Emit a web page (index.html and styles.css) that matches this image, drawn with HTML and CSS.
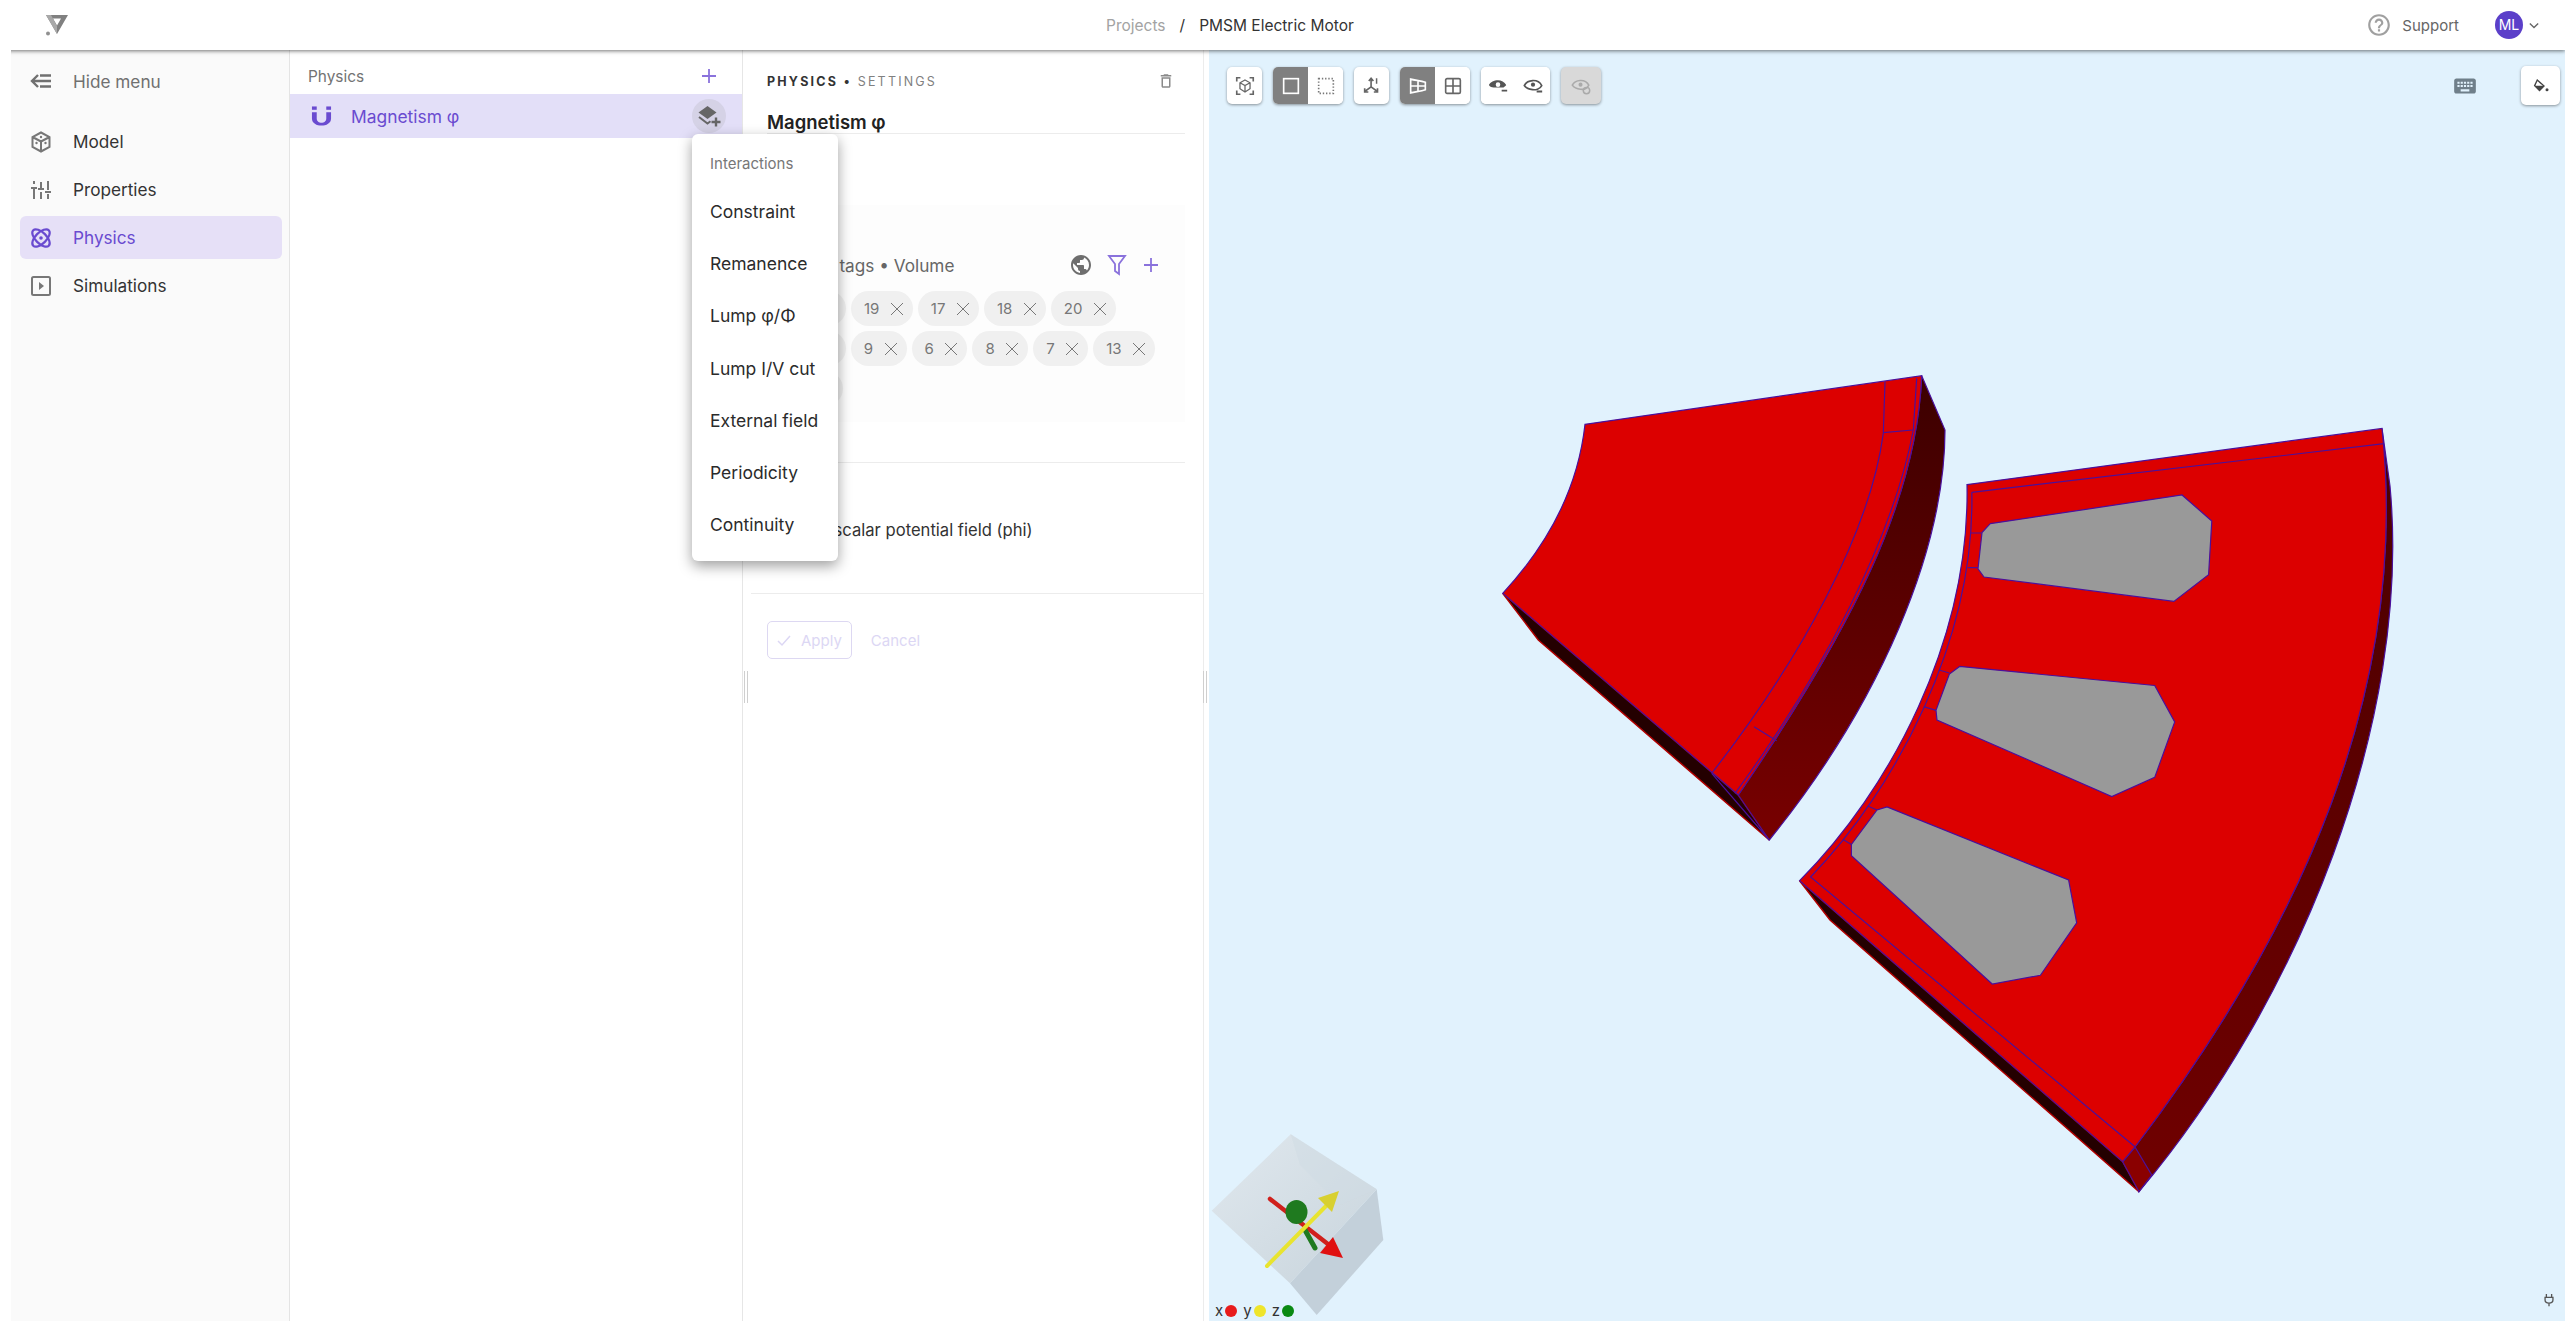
FILE: index.html
```html
<!DOCTYPE html>
<html lang="en">
<head>
    <meta charset="UTF-8">
    <title>PMSM Electric Motor</title>
    <link rel="stylesheet" href="styles.css">
</head>
<body>
    <header class="topbar">
        <svg class="logo" viewBox="0 0 24 22"><path d="M1 1h22L12 20zM8 4.500l4 7 4-7z" fill="#808080" fill-rule="evenodd"/><path d="M1 1l5 0 6 11v8z" fill="#a8a8a8"/><circle cx="3" cy="19.500" r="2" fill="#909090"/></svg>
        <nav class="crumbs">
            <span class="crumb-link">Projects</span>
            <span class="crumb-sep">/</span>
            <span class="crumb-current">PMSM Electric Motor</span>
        </nav>
        <div class="top-right">
            <svg class="icon-help" viewBox="0 0 24 24"><path d="M11 18h2v-2h-2v2zm1-16C6.480 2 2 6.480 2 12s4.480 10 10 10 10-4.480 10-10S17.520 2 12 2zm0 18c-4.410 0-8-3.590-8-8s3.590-8 8-8 8 3.590 8 8-3.590 8-8 8zm0-14c-2.210 0-4 1.790-4 4h2c0-1.100.9-2 2-2s2 .9 2 2c0 2-3 1.750-3 5h2c0-2.250 3-2.500 3-5 0-2.210-1.790-4-4-4z"/></svg>
            <span class="support">Support</span>
            <span class="avatar">ML</span>
            <svg class="chevron" viewBox="0 0 12 8"><path d="M1 1.500l5 5 5-5"/></svg>
        </div>
    </header>

    <div class="main">
        <div class="gutter"></div>

        <aside class="sidebar">
            <div class="hide-row">
                <svg class="nav-icon" viewBox="0 0 24 24"><path d="M22 6.500H11M22 12H4M22 17.500H11M9 6l-6 6 6 6" class="stroke-hide"/></svg>
                <span>Hide menu</span>
            </div>
            <div class="nav-item">
                <svg class="nav-icon" viewBox="0 0 24 24"><path d="M12 2.500l8.500 4.500v10L12 21.500 3.500 17V7zM3.500 7l8.500 4.500L20.500 7M12 11.500v10" class="stroke-gray"/><circle cx="12" cy="7" r="1.200" fill="#777"/><circle cx="7.500" cy="13" r="1.200" fill="#777"/><circle cx="16.500" cy="13" r="1.200" fill="#777"/></svg>
                <span>Model</span>
            </div>
            <div class="nav-item">
                <svg class="nav-icon" viewBox="0 0 24 24"><path d="M5 10v11M12 4v6M12 14v7M19 3v9M19 16v5M2 10h6M9 11h6M16 14h6M5 3v3" class="stroke-gray"/></svg>
                <span>Properties</span>
            </div>
            <div class="nav-item nav-active">
                <svg class="nav-icon" viewBox="0 0 24 24"><g class="stroke-purple"><ellipse cx="12" cy="12" rx="5.500" ry="11" transform="rotate(45 12 12)"/><ellipse cx="12" cy="12" rx="5.500" ry="11" transform="rotate(-45 12 12)"/></g><circle cx="12" cy="12" r="1.800" fill="#6a4bd0"/></svg>
                <span>Physics</span>
            </div>
            <div class="nav-item">
                <svg class="nav-icon" viewBox="0 0 24 24"><rect x="3" y="3" width="18" height="18" rx="1.500" class="stroke-gray"/><path d="M10 8l5 4-5 4z" fill="#777"/></svg>
                <span>Simulations</span>
            </div>
        </aside>

        <section class="list-col">
            <div class="list-head">
                <span>Physics</span>
                <svg class="plus" viewBox="0 0 20 20"><path d="M10 3v14M3 10h14"/></svg>
            </div>
            <div class="list-row">
                <svg class="magnet" viewBox="0 0 22 22"><path d="M1 7h5v6.500c0 6 10 6 10 0V7h5v6.500c0 10-20 10-20 0z" fill="#6a4bd0"/><rect x="1" y="1" width="5" height="3.500" fill="#6a4bd0"/><rect x="16" y="1" width="5" height="3.500" fill="#6a4bd0"/></svg>
                <span class="list-label">Magnetism φ</span>
                <span class="round-btn">
                    <svg viewBox="0 0 24 24"><path d="M10.500 2l9 6.500-9 6.500-9-6.500z" fill="#666"/><path d="M2 13l8.500 6.500 3-2.200" fill="none" stroke="#666" stroke-width="2"/><path d="M19 13.500v9M14.500 18h9" stroke="#666" stroke-width="2.400"/></svg>
                </span>
            </div>
        </section>

        <section class="settings">
            <div class="settings-head">
                <span class="settings-crumb"><b>PHYSICS</b> <b class="dot">•</b> SETTINGS</span>
                <svg class="trash" viewBox="0 0 24 24"><path d="M6 19c0 1.100.9 2 2 2h8c1.100 0 2-.9 2-2V7H6v12zM8 9h8v10H8V9zm7.500-5l-1-1h-5l-1 1H5v2h14V4z"/></svg>
            </div>
            <h2 class="settings-title">Magnetism φ</h2>
            <div class="tags-box">
                <div class="tags-head">
                    <span>Physical tags • Volume</span>
                    <span class="tags-actions">
                        <svg class="icon-globe" viewBox="0 0 24 24"><path d="M12 2C6.480 2 2 6.480 2 12s4.480 10 10 10 10-4.480 10-10S17.520 2 12 2zm-1 17.930c-3.950-.49-7-3.850-7-7.930 0-.62.08-1.210.21-1.790L9 15v1c0 1.100.9 2 2 2v1.930zm6.900-2.540c-.26-.81-1-1.390-1.900-1.390h-1v-3c0-.55-.45-1-1-1H8v-2h2c.55 0 1-.45 1-1V7h2c1.100 0 2-.9 2-2v-.41c2.930 1.190 5 4.060 5 7.410 0 2.080-.8 3.970-2.100 5.390z"/></svg>
                        <svg class="icon-filter" viewBox="0 0 20 22"><path d="M2 2h16l-6 8v10l-4-3v-7z"/></svg>
                        <svg class="plus" viewBox="0 0 20 20"><path d="M10 3v14M3 10h14"/></svg>
                    </span>
                </div>
                <div class="chips">
                    <span class="chip">16<i></i></span>
                    <span class="chip">19<i></i></span>
                    <span class="chip">17<i></i></span>
                    <span class="chip">18<i></i></span>
                    <span class="chip">20<i></i></span>
                    <span class="chip">12<i></i></span>
                    <span class="chip">9<i></i></span>
                    <span class="chip">6<i></i></span>
                    <span class="chip">8<i></i></span>
                    <span class="chip">7<i></i></span>
                    <span class="chip">13<i></i></span>
                    <span class="chip">11<i></i></span>
                </div>
            </div>
            <div class="tags-rule"></div>
            <div class="field-row">Magnetic scalar potential field (phi)</div>
            <div class="actions">
                <span class="btn-apply">
                    <svg viewBox="0 0 16 16"><path d="M2 9l4 4 8-9"/></svg>
                    Apply
                </span>
                <span class="btn-cancel">Cancel</span>
            </div>
        </section>

        <div class="canvas">
            <svg class="scene" viewBox="1209 50 1356 1271">
                <defs>
                    <linearGradient id="side1" x1="0" y1="0" x2="0" y2="1">
                        <stop offset="0" stop-color="#3c0000"/>
                        <stop offset="1" stop-color="#780000"/>
                    </linearGradient>
                    <linearGradient id="side2" x1="0" y1="0" x2="0" y2="1">
                        <stop offset="0" stop-color="#4a0000"/>
                        <stop offset="1" stop-color="#700000"/>
                    </linearGradient>
                    <linearGradient id="cubeTop" x1="0" y1="0" x2="1" y2="1">
                        <stop offset="0" stop-color="#e0e8ee"/>
                        <stop offset="1" stop-color="#c8d4dc"/>
                    </linearGradient>
                </defs>

                <!-- rotor piece -->
                <path class="side-low" d="M1502.700 593.300L1538.300 640L1769.300 840L1738.300 795z"/>
                <path d="M1921.700 375.700L1945 430C1945 550 1880 703.300 1769.300 840L1738.300 795C1853.300 626.700 1916.700 500 1921.700 375.700z" fill="url(#side1)" class="edge"/>
                <path d="M1585 424.300L1921.700 375.700C1916.700 500 1853.300 626.700 1738.300 795L1502.700 593.300C1536.700 556.700 1576.700 500 1585 424.300z" fill="#dc0000" class="edge"/>
                <path class="edge" d="M1885 381.700L1883.300 433.300C1870 533.300 1800 660 1711.700 773.300"/>
                <path class="edge" d="M1916.700 378.300L1913.300 430C1893.300 536.700 1823.300 673.300 1735 793.300"/>
                <path class="edge" d="M1883.300 432.700L1912.700 430M1754 726.700L1776.700 740.700M1711.700 773.300L1769.300 840"/>

                <!-- stator piece -->
                <path class="side-low" d="M1799.600 880.700L1830 920L2139 1191.700L2122.700 1161.700z"/>
                <path d="M2382 428.400L2390 486C2412 720 2300 1000 2139 1191.700L2135 1147C2300 930 2410 690 2382 428.400z" fill="url(#side2)" class="edge"/>
                <path d="M2122.700 1161.700L2139 1191.700L2151.700 1175L2135 1147z" fill="#8a0000" class="edge"/>
                <path d="M1967 484.600L2382 428.400C2410 690 2300 930 2135 1147L2122.700 1161.700L1799.600 880.700C1890 790 1970 640 1967 484.600z" fill="#dc0000" class="edge"/>
                <path class="edge" d="M1971.800 492.300L2384 443.700M1971.800 492.300C1975 640 1895 790 1810.600 877L2135 1146.700"/>
                <path class="edge" d="M1971 533H1982M1967.800 567.700H1978M1939 670L1949.400 673M1923.700 706.600L1936 710.400M1867.800 806L1877 810M1843 839.400L1851.400 844.400"/>
                <polygon class="slot" points="1990.200,523.700 2182,495 2211.800,521 2208.600,574.600 2173.900,601.400 1984,577 1978,568.800 1982,532.500"/>
                <polygon class="slot" points="1959.600,666.400 2154.700,685.500 2174.700,721.900 2154.700,777.400 2111.800,796.500 1937,720 1936,710.400 1949.400,674"/>
                <polygon class="slot" points="1887,806.900 2068.600,880 2076.700,922.800 2040.400,975.300 1992.200,984 1851.400,855.800 1851.400,844.400 1877,809.900"/>

                <!-- orientation cube -->
                <polygon points="1376.700,1189.300 1383.300,1240 1316.700,1315 1290,1283.300" fill="#c3d0da"/>
                <polygon points="1290.700,1134.300 1376.700,1189.300 1290,1283.300 1211.700,1210.700" fill="url(#cubeTop)"/>
                <polygon points="1290.700,1134.300 1376.700,1189.300 1340,1205 1300,1165" fill="#cfdbe3" fill-opacity="0.5"/>
                <path d="M1270 1199L1333 1248" stroke="#d0201c" stroke-width="4.500" stroke-linecap="round"/>
                <polygon points="1333,1237 1343,1258 1320,1253" fill="#e01010"/>
                <path d="M1305 1230L1315 1248" stroke="#1f7a1f" stroke-width="5" stroke-linecap="round"/>
                <ellipse cx="1296.500" cy="1212" rx="11" ry="12" fill="#1f7a1f"/>
                <path d="M1267 1266L1327 1205" stroke="#e8e430" stroke-width="4" stroke-linecap="round"/>
                <polygon points="1339,1191 1318,1198 1332,1212" fill="#d8d030"/>
            </svg>

            <div class="toolbar">
                <span class="tool">
                    <svg viewBox="0 0 24 24"><path d="M3 7V3h4M17 3h4v4M21 17v4h-4M7 21H3v-4" class="stroke-tool"/><path d="M12 5.500l5.500 3v6.500L12 18.500 6.500 15V8.500zM6.500 8.500L12 11.500l5.500-3M12 11.500v7" class="stroke-tool-thin"/></svg>
                </span>
                <span class="tool-group">
                    <span class="tool tool-on"><svg viewBox="0 0 24 24"><rect x="4" y="4" width="16" height="16" class="stroke-white"/></svg></span>
                    <span class="tool"><svg viewBox="0 0 24 24"><rect x="4" y="4" width="16" height="16" class="stroke-dotted"/></svg></span>
                </span>
                <span class="tool">
                    <svg viewBox="0 0 24 24"><path d="M11 13V4M8.500 6.500L11 3.500l2.500 3M11 13l-7 5M4 14.500V18.500h4M11 13l7 5M18 14.500v4h-4" class="stroke-tool"/><path d="M17 3.500v6" stroke="#666" stroke-width="1.600"/></svg>
                </span>
                <span class="tool-group">
                    <span class="tool tool-on"><svg viewBox="0 0 24 24"><path d="M4 4.500C9 6 15 6 20 8v8c-5 2-11 2-16 3.500zM12 5.500v13M4 12h16" class="stroke-white"/></svg></span>
                    <span class="tool"><svg viewBox="0 0 24 24"><rect x="4" y="4" width="16" height="16" rx="1.500" class="stroke-tool"/><path d="M12 4v16M4 12h16" class="stroke-tool"/></svg></span>
                </span>
                <span class="tool-group">
                    <span class="tool tool-wide"><svg viewBox="0 0 24 24"><path d="M2 11c3-6 15-8 19 0-1 1-1.500 2-3 2.500H9c-3 .5-5 0-7-2.500z" fill="#555"/><circle cx="12" cy="10.500" r="2.500" fill="#fff"/><path d="M16 17h6" stroke="#555" stroke-width="2"/></svg></span>
                    <span class="tool tool-wide"><svg viewBox="0 0 24 24"><path d="M2.500 11.500c3-6.500 15-8 19 0-2 4-7 5-10 4.500-3.500-.3-7-1.500-9-4.500z" fill="none" stroke="#555" stroke-width="1.800"/><circle cx="12" cy="10.500" r="2.300" fill="#555"/><path d="M16 18h6" stroke="#555" stroke-width="2"/></svg></span>
                </span>
                <span class="tool tool-off">
                    <svg viewBox="0 0 24 24"><path d="M2.500 11c3-6 14-7.500 18 0-2 4-6 5-9 4.500-3.500-.3-7-1.500-9-4.500z" fill="none" stroke="#aaa" stroke-width="1.700"/><circle cx="11.500" cy="10.500" r="2.200" fill="#aaa"/><circle cx="18" cy="17" r="3.500" fill="none" stroke="#aaa" stroke-width="1.600"/></svg>
                </span>
            </div>

            <svg class="keyboard" viewBox="0 0 24 24"><path d="M20 5H4c-1.100 0-1.990.9-1.990 2L2 17c0 1.100.9 2 2 2h16c1.100 0 2-.9 2-2V7c0-1.100-.9-2-2-2zm-9 3h2v2h-2V8zm0 3h2v2h-2v-2zM8 8h2v2H8V8zm0 3h2v2H8v-2zm-1 2H5v-2h2v2zm0-3H5V8h2v2zm9 7H8v-2h8v2zm0-4h-2v-2h2v2zm0-3h-2V8h2v2zm3 3h-2v-2h2v2zm0-3h-2V8h2v2z"/></svg>
            <span class="tool paint-btn">
                <svg viewBox="0 0 24 24"><path d="M7 4l9 8-6 6-6.500-6.500z" fill="#fff" stroke="#444" stroke-width="1.800"/><path d="M3.500 11.500h12.500L10 18z" fill="#444"/><circle cx="20" cy="17" r="2" fill="#444"/></svg>
            </span>

            <div class="axes-legend">
                <span>x</span><i class="dot-x"></i>
                <span>y</span><i class="dot-y"></i>
                <span>z</span><i class="dot-z"></i>
            </div>
            <svg class="plug" viewBox="0 0 16 16"><path d="M5 1v4M11 1v4M3.500 5h9v3c0 2-2 3.500-4.500 3.500S3.500 10 3.500 8zM8 11.500V15"/></svg>
        </div>

        <div class="menu">
            <div class="menu-title">Interactions</div>
            <div class="menu-item">Constraint</div>
            <div class="menu-item">Remanence</div>
            <div class="menu-item">Lump φ/Φ</div>
            <div class="menu-item">Lump I/V cut</div>
            <div class="menu-item">External field</div>
            <div class="menu-item">Periodicity</div>
            <div class="menu-item">Continuity</div>
        </div>
    </div>
</body>
</html>
```
FILE: styles.css
```css
html, body {
    height: 100%;
    margin: 0;
}
body {
    display: flex;
    flex-direction: column;
    overflow: hidden;
    background: #fff;
    color: #333;
    font-family: Inter, "Noto Sans", sans-serif;
    font-size: 16px;
}

/* top bar */
.topbar {
    position: relative;
    z-index: 1;
    flex: 0 0 50px;
    display: flex;
    align-items: center;
    background: #fff;
    box-shadow: 0 1px 4px rgba(0,0,0,0.55);
}
.logo {
    width: 24px;
    height: 22px;
    margin-left: 45px;
}
.crumbs {
    display: flex;
    align-items: center;
    margin-left: 1037px;
    font-size: 15.5px;
}
.crumb-link {
    color: #a3a3a3;
}
.crumb-sep {
    margin: 0 14px;
}
.top-right {
    display: flex;
    align-items: center;
    margin-left: auto;
    padding-right: 26px;
}
.icon-help {
    width: 26px;
    height: 26px;
    fill: #a0a0a0;
}
.support {
    margin-left: 10px;
    color: #666;
    font-size: 15px;
}
.avatar {
    width: 28px;
    height: 28px;
    margin-left: 36px;
    border-radius: 50%;
    background: #5b3fc9;
    color: #fff;
    font-size: 14px;
    line-height: 28px;
    text-align: center;
}
.chevron {
    width: 10px;
    height: 7px;
    margin-left: 6px;
    fill: none;
    stroke: #666;
    stroke-width: 1.6;
}

/* columns */
.main {
    position: relative;
    flex: 1;
    display: flex;
    min-height: 0;
}
.gutter {
    position: relative;
    z-index: 2;
    flex: 0 0 11px;
    margin-top: -6px;
    background: #fff;
}
.sidebar {
    flex: 0 0 279px;
    box-sizing: border-box;
    padding-top: 10px;
    background: #fafafa;
    border-right: 1px solid #e4e4e4;
}
.hide-row {
    display: flex;
    align-items: center;
    gap: 20px;
    height: 42px;
    margin: 0 8px 18px 9px;
    padding-left: 9px;
    color: #707070;
    font-size: 17.2px;
}
.nav-item {
    display: flex;
    align-items: center;
    gap: 20px;
    height: 43px;
    margin: 0 7px 5px 9px;
    padding-left: 9px;
    border-radius: 6px;
    font-size: 17.2px;
}
.nav-active {
    background: #e6e0f7;
    color: #6a4bd0;
}
.nav-icon {
    flex: none;
    width: 24px;
    height: 24px;
}
.stroke-gray {
    fill: none;
    stroke: #777;
    stroke-width: 2;
}
.stroke-hide {
    fill: none;
    stroke: #707070;
    stroke-width: 2.4;
}
.stroke-purple {
    fill: none;
    stroke: #6a4bd0;
    stroke-width: 2.2;
}

.list-col {
    flex: 0 0 453px;
    box-sizing: border-box;
    background: #fff;
    border-right: 1px solid #e6e6e6;
}
.list-head {
    display: flex;
    align-items: center;
    justify-content: space-between;
    height: 36px;
    margin-top: 8px;
    padding: 0 23px 0 18px;
    color: #737373;
    font-size: 15.4px;
}
.plus {
    width: 20px;
    height: 20px;
    fill: none;
    stroke: #8a72dc;
    stroke-width: 1.8;
}
.list-row {
    display: flex;
    align-items: center;
    height: 44px;
    padding: 0 16px 0 21px;
    background: #e3dff8;
    color: #6a4bd0;
}
.magnet {
    flex: none;
    width: 21px;
    height: 22px;
}
.list-label {
    flex: 1;
    margin-left: 19px;
    font-size: 17.4px;
}
.round-btn {
    display: flex;
    align-items: center;
    justify-content: center;
    width: 34px;
    height: 34px;
    border-radius: 50%;
    background: #d5d2e6;
}
.round-btn svg {
    width: 24px;
    height: 24px;
}

/* settings panel */
.settings {
    position: relative;
    flex: 0 0 461px;
    box-sizing: border-box;
    background: #fff;
    border-right: 1px solid #ececec;
    margin-right: 5px;
}
.settings::before,
.settings::after {
    content: "";
    position: absolute;
    top: 621px;
    width: 2px;
    height: 32px;
    border-left: 1px solid #cfcfcf;
    border-right: 1px solid #cfcfcf;
}
.settings::before {
    left: 1px;
}
.settings::after {
    right: -4px;
}
.settings-head {
    display: flex;
    align-items: center;
    justify-content: space-between;
    height: 40px;
    margin-top: 11px;
    padding: 0 28px 0 24px;
}
.settings-crumb {
    color: #808080;
    font-size: 12.5px;
    letter-spacing: 2.2px;
}
.settings-crumb b {
    color: #333;
    font-weight: 700;
}
.trash {
    width: 18px;
    height: 18px;
    fill: #8a8a8a;
}
.settings-title {
    box-sizing: border-box;
    height: 33px;
    margin: 0 18px 0 24px;
    padding-top: 9px;
    border-bottom: 1px solid #ececec;
    font-size: 18.5px;
    font-weight: 600;
    line-height: 24px;
    color: #222;
}
.tags-box {
    height: 217px;
    margin: 71px 18px 0 24px;
    box-sizing: border-box;
    padding-top: 44px;
    background: #fdfdfd;
}
.tags-head {
    display: flex;
    align-items: center;
    justify-content: space-between;
    height: 32px;
    color: #666;
    font-size: 17.2px;
}
.tags-actions {
    display: flex;
    align-items: center;
    gap: 14px;
    padding-right: 24px;
}
.icon-globe {
    width: 24px;
    height: 24px;
    fill: #6e6e6e;
}
.icon-filter {
    width: 20px;
    height: 22px;
    fill: none;
    stroke: #8a72dc;
    stroke-width: 1.8;
}
.chips {
    display: flex;
    flex-wrap: wrap;
    gap: 5px;
    margin-top: 10px;
    padding: 0 20px 0 17px;
}
.chip {
    display: flex;
    align-items: center;
    gap: 11.5px;
    height: 35px;
    padding: 0 10px 0 13px;
    border-radius: 18px;
    background: #f0f0f0;
    color: #777;
    font-size: 15px;
}
.chip i {
    position: relative;
    width: 12px;
    height: 12px;
    background:
        linear-gradient(45deg, transparent 46%, #777 46%, #777 54%, transparent 54%),
        linear-gradient(-45deg, transparent 46%, #777 46%, #777 54%, transparent 54%);
}
.tags-rule {
    height: 40px;
    margin: 0 18px 0 24px;
    border-bottom: 1px solid #ececec;
}
.field-row {
    display: flex;
    align-items: center;
    box-sizing: border-box;
    height: 131px;
    margin-left: 8px;
    padding: 4px 0 0 5px;
    border-bottom: 1px solid #ececec;
    font-size: 16.6px;
    color: #333;
}
.actions {
    display: flex;
    align-items: center;
    gap: 19px;
    margin-top: 27px;
    padding-left: 24px;
    font-size: 15px;
    color: #dcd7f4;
}
.btn-apply {
    display: flex;
    align-items: center;
    gap: 9px;
    height: 38px;
    padding: 0 9px 0 8px;
    box-sizing: border-box;
    border: 1px solid #ddd8f2;
    border-radius: 5px;
}
.btn-apply svg {
    width: 16px;
    height: 16px;
    fill: none;
    stroke: #dcd7f4;
    stroke-width: 1.5;
}

/* 3d view */
.canvas {
    position: relative;
    flex: 1;
    background: #e1f2fd;
    overflow: hidden;
}
.scene {
    position: absolute;
    top: 0;
    left: 0;
    width: 1356px;
    height: 1271px;
}
.edge {
    stroke: #4a109c;
    stroke-width: 1.2;
}
path.edge:not([fill]) {
    fill: none;
}
.side-low {
    fill: #240000;
    stroke: #b00000;
    stroke-width: 1.5;
}
.slot {
    fill: #999;
    stroke: #4a109c;
    stroke-width: 1.2;
}
.toolbar {
    position: absolute;
    top: 17px;
    left: 18px;
    display: flex;
    gap: 11px;
}
.tool,
.tool-group {
    display: flex;
    height: 37px;
    border-radius: 5px;
    background: #fff;
    box-shadow: 0 1px 3px rgba(0,0,0,0.4);
    overflow: hidden;
}
.tool {
    align-items: center;
    justify-content: center;
    width: 35px;
}
.tool svg {
    width: 22px;
    height: 22px;
}
.tool-group .tool {
    border-radius: 0;
    box-shadow: none;
}
.tool-wide {
    width: 34.5px;
}
.tool-on {
    background: #808080;
}
.tool-off {
    width: 40px;
    background: #d9d9d9;
}
.stroke-tool {
    fill: none;
    stroke: #666;
    stroke-width: 1.8;
}
.stroke-tool-thin {
    fill: none;
    stroke: #666;
    stroke-width: 1.4;
}
.stroke-white {
    fill: none;
    stroke: #fff;
    stroke-width: 1.8;
}
.stroke-dotted {
    fill: none;
    stroke: #777;
    stroke-width: 1.8;
    stroke-dasharray: 1.5 2;
}
.keyboard {
    position: absolute;
    top: 23px;
    right: 87px;
    width: 26px;
    height: 26px;
    fill: #6f7f8a;
}
.paint-btn {
    position: absolute;
    top: 16px;
    right: 5px;
    width: 39px;
    height: 39px;
}
.paint-btn svg {
    width: 18px;
    height: 18px;
}
.axes-legend {
    position: absolute;
    left: 6px;
    bottom: 1px;
    display: flex;
    align-items: center;
    height: 20px;
    color: #333;
    font-size: 15px;
}
.axes-legend i {
    width: 12px;
    height: 12px;
    margin: 2px 6px 0 2px;
    border-radius: 50%;
}
.dot-x { background: #e81c1c; }
.dot-y { background: #efe52b; }
.dot-z { background: #0a8a12; }
.plug {
    position: absolute;
    right: 9px;
    bottom: 14px;
    width: 14px;
    height: 14px;
    fill: none;
    stroke: #555;
    stroke-width: 1.5;
}

/* interactions dropdown */
.menu {
    position: absolute;
    top: 84px;
    left: 692px;
    z-index: 3;
    box-sizing: border-box;
    width: 146px;
    height: 427px;
    padding: 8px 0 10px 18px;
    border-radius: 6px;
    background: #fff;
    box-shadow: 0 5px 14px rgba(0,0,0,0.38);
}
.menu-title {
    display: flex;
    align-items: center;
    height: 43px;
    color: #777;
    font-size: 15px;
}
.menu-item {
    display: flex;
    align-items: center;
    height: 52.3px;
    font-size: 17.5px;
    color: #2b2b2b;
}
```
